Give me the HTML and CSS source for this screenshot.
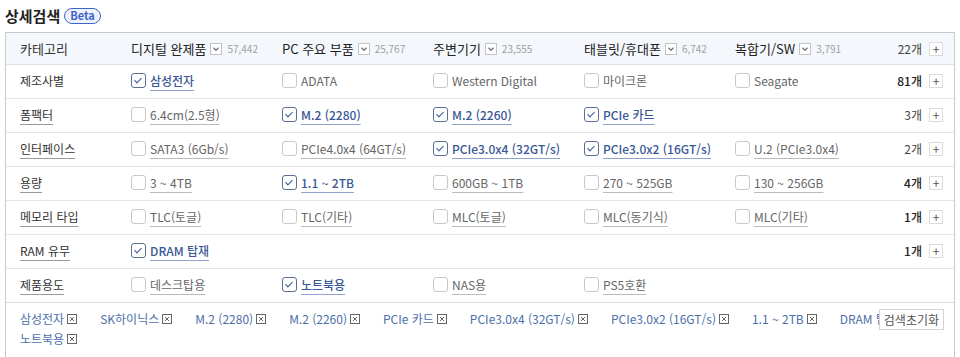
FILE: index.html
```html
<!DOCTYPE html>
<html lang="ko">
<head>
  <meta charset="UTF-8" />
  <title>상세검색</title>
  <link rel="stylesheet" href="styles.css">
</head>
<body>
  <div class="search">
    <h2 class="title">상세검색 <span class="beta">Beta</span></h2>

    <div class="box">
      <div class="row head">
        <div class="label">카테고리</div>
        <div class="cat">디지털 완제품 <span class="drop"><svg viewBox="0 0 10 10"><path d="M2.5 3.8 5 6.3 7.5 3.8" /></svg></span> <span class="num">57,442</span></div>
        <div class="cat">PC 주요 부품 <span class="drop"><svg viewBox="0 0 10 10"><path d="M2.5 3.8 5 6.3 7.5 3.8" /></svg></span> <span class="num">25,767</span></div>
        <div class="cat">주변기기 <span class="drop"><svg viewBox="0 0 10 10"><path d="M2.5 3.8 5 6.3 7.5 3.8" /></svg></span> <span class="num">23,555</span></div>
        <div class="cat">태블릿/휴대폰 <span class="drop"><svg viewBox="0 0 10 10"><path d="M2.5 3.8 5 6.3 7.5 3.8" /></svg></span> <span class="num">6,742</span></div>
        <div class="cat">복합기/SW <span class="drop"><svg viewBox="0 0 10 10"><path d="M2.5 3.8 5 6.3 7.5 3.8" /></svg></span> <span class="num">3,791</span></div>
        <div class="more"><span class="cnt">22개</span><span class="plus">+</span></div>
      </div>

      <div class="row">
        <div class="label plain">제조사별</div>
        <label class="opt on"><i class="chk"></i><span>삼성전자</span></label>
        <label class="opt plain"><i class="chk"></i><span>ADATA</span></label>
        <label class="opt plain"><i class="chk"></i><span>Western Digital</span></label>
        <label class="opt plain"><i class="chk"></i><span>마이크론</span></label>
        <label class="opt plain"><i class="chk"></i><span>Seagate</span></label>
        <div class="more"><span class="cnt bold">81개</span><span class="plus">+</span></div>
      </div>

      <div class="row">
        <div class="label">폼팩터</div>
        <label class="opt"><i class="chk"></i><span>6.4cm(2.5형)</span></label>
        <label class="opt on"><i class="chk"></i><span>M.2 (2280)</span></label>
        <label class="opt on"><i class="chk"></i><span>M.2 (2260)</span></label>
        <label class="opt on"><i class="chk"></i><span>PCIe 카드</span></label>
        <div class="opt"></div>
        <div class="more"><span class="cnt">3개</span><span class="plus">+</span></div>
      </div>

      <div class="row">
        <div class="label">인터페이스</div>
        <label class="opt"><i class="chk"></i><span>SATA3 (6Gb/s)</span></label>
        <label class="opt"><i class="chk"></i><span>PCIe4.0x4 (64GT/s)</span></label>
        <label class="opt on"><i class="chk"></i><span>PCIe3.0x4 (32GT/s)</span></label>
        <label class="opt on"><i class="chk"></i><span>PCIe3.0x2 (16GT/s)</span></label>
        <label class="opt"><i class="chk"></i><span>U.2 (PCIe3.0x4)</span></label>
        <div class="more"><span class="cnt">2개</span><span class="plus">+</span></div>
      </div>

      <div class="row">
        <div class="label">용량</div>
        <label class="opt"><i class="chk"></i><span>3 ~ 4TB</span></label>
        <label class="opt on"><i class="chk"></i><span>1.1 ~ 2TB</span></label>
        <label class="opt"><i class="chk"></i><span>600GB ~ 1TB</span></label>
        <label class="opt"><i class="chk"></i><span>270 ~ 525GB</span></label>
        <label class="opt"><i class="chk"></i><span>130 ~ 256GB</span></label>
        <div class="more"><span class="cnt bold">4개</span><span class="plus">+</span></div>
      </div>

      <div class="row">
        <div class="label">메모리 타입</div>
        <label class="opt"><i class="chk"></i><span>TLC(토글)</span></label>
        <label class="opt"><i class="chk"></i><span>TLC(기타)</span></label>
        <label class="opt"><i class="chk"></i><span>MLC(토글)</span></label>
        <label class="opt"><i class="chk"></i><span>MLC(동기식)</span></label>
        <label class="opt"><i class="chk"></i><span>MLC(기타)</span></label>
        <div class="more"><span class="cnt bold">1개</span><span class="plus">+</span></div>
      </div>

      <div class="row">
        <div class="label">RAM 유무</div>
        <label class="opt on"><i class="chk"></i><span>DRAM 탑재</span></label>
        <div class="opt"></div>
        <div class="opt"></div>
        <div class="opt"></div>
        <div class="opt"></div>
        <div class="more"><span class="cnt bold">1개</span><span class="plus">+</span></div>
      </div>

      <div class="row last">
        <div class="label">제품용도</div>
        <label class="opt"><i class="chk"></i><span>데스크탑용</span></label>
        <label class="opt on"><i class="chk"></i><span>노트북용</span></label>
        <label class="opt"><i class="chk"></i><span>NAS용</span></label>
        <label class="opt"><i class="chk"></i><span>PS5호환</span></label>
        <div class="opt"></div>
        <div class="more"></div>
      </div>

      <div class="picked">
        <div class="tags">
          <span class="tag">삼성전자 <i class="x"><svg viewBox="0 0 10 10"><rect x="0.5" y="0.5" width="9" height="9" /><path d="M3 3 7 7M7 3 3 7" /></svg></i></span>
          <span class="tag">SK하이닉스 <i class="x"><svg viewBox="0 0 10 10"><rect x="0.5" y="0.5" width="9" height="9" /><path d="M3 3 7 7M7 3 3 7" /></svg></i></span>
          <span class="tag">M.2 (2280) <i class="x"><svg viewBox="0 0 10 10"><rect x="0.5" y="0.5" width="9" height="9" /><path d="M3 3 7 7M7 3 3 7" /></svg></i></span>
          <span class="tag">M.2 (2260) <i class="x"><svg viewBox="0 0 10 10"><rect x="0.5" y="0.5" width="9" height="9" /><path d="M3 3 7 7M7 3 3 7" /></svg></i></span>
          <span class="tag">PCIe 카드 <i class="x"><svg viewBox="0 0 10 10"><rect x="0.5" y="0.5" width="9" height="9" /><path d="M3 3 7 7M7 3 3 7" /></svg></i></span>
          <span class="tag">PCIe3.0x4 (32GT/s) <i class="x"><svg viewBox="0 0 10 10"><rect x="0.5" y="0.5" width="9" height="9" /><path d="M3 3 7 7M7 3 3 7" /></svg></i></span>
          <span class="tag">PCIe3.0x2 (16GT/s) <i class="x"><svg viewBox="0 0 10 10"><rect x="0.5" y="0.5" width="9" height="9" /><path d="M3 3 7 7M7 3 3 7" /></svg></i></span>
          <span class="tag">1.1 ~ 2TB <i class="x"><svg viewBox="0 0 10 10"><rect x="0.5" y="0.5" width="9" height="9" /><path d="M3 3 7 7M7 3 3 7" /></svg></i></span>
          <span class="tag">DRAM 탑재 <i class="x"><svg viewBox="0 0 10 10"><rect x="0.5" y="0.5" width="9" height="9" /><path d="M3 3 7 7M7 3 3 7" /></svg></i></span>
          <span class="tag">노트북용 <i class="x"><svg viewBox="0 0 10 10"><rect x="0.5" y="0.5" width="9" height="9" /><path d="M3 3 7 7M7 3 3 7" /></svg></i></span>
        </div>
        <button class="reset">검색초기화</button>
      </div>
    </div>
  </div>
</body>
</html>
```

FILE: styles.css
```css
* { box-sizing: border-box; margin: 0; padding: 0; }
body {
  font-family: "Noto Sans CJK KR", "Noto Sans", sans-serif;
  font-size: 12px;
  color: #333;
  background: #fff;
}
.search {
  width: 950px;
  margin-left: 5px;
}
.title {
  height: 32px;
  display: flex;
  align-items: center;
  gap: 4px;
  font-size: 15px;
  font-weight: bold;
  color: #222;
  padding-bottom: 1px;
}
.beta {
  display: inline-block;
  height: 16px;
  line-height: 13px;
  padding: 0 5px;
  border: 1.5px solid #3e64c8;
  border-radius: 9px;
  background: #eef3ff;
  color: #3e64c8;
  font-size: 11px;
  font-weight: bold;
}
.box {
  border: 1px solid #c9c9c9;
}
.row {
  display: grid;
  grid-template-columns: 125px repeat(5, 151px) 1fr;
  align-items: center;
  height: 34px;
  padding-bottom: 2px;
  border-bottom: 1px solid #e6e6e6;
}
.row.head {
  height: 32px;
  padding-bottom: 0;
  background: #f4f7fb;
  border-bottom-color: #dfe3e8;
  font-size: 13px;
  color: #222;
}
.row.last { border-bottom-color: #dcdcdc; }
.label {
  padding-left: 14px;
  color: #333;
}
.row:not(.head) .label {
  justify-self: start;
}
.row:not(.head) .label:not(.plain) {
  text-decoration: underline;
  text-decoration-color: #999;
  text-underline-offset: 4px;
}
.cat {
  display: flex;
  align-items: center;
  white-space: nowrap;
}
.drop {
  display: inline-flex;
  width: 12px;
  height: 12px;
  margin: 0 5px 0 4px;
  border: 1px solid #c4c4c4;
  background: #fff;
}
.drop svg {
  width: 10px;
  height: 10px;
  fill: none;
  stroke: #777;
  stroke-width: 1.3;
}
.num {
  font-size: 10px;
  color: #a0a0a0;
}
.more {
  display: flex;
  justify-content: flex-end;
  align-items: center;
  gap: 7px;
  padding-right: 11px;
}
.cnt {
  font-size: 12px;
  color: #444;
}
.cnt.bold { font-weight: 500; color: #222; }
.plus {
  width: 14px;
  height: 14px;
  border: 1px solid #dcdcdc;
  background: #fff;
  display: flex;
  align-items: center;
  justify-content: center;
  font-size: 12px;
  line-height: 1;
  color: #555;
}
.opt {
  display: flex;
  align-items: center;
  gap: 4px;
  color: #666;
  white-space: nowrap;
}
.opt span {
  text-decoration: underline;
  text-decoration-color: #bbb;
  text-underline-offset: 4px;
}
.opt.plain span { text-decoration: none; }
.chk {
  width: 15px;
  height: 15px;
  border: 1px solid #c8c8c8;
  border-radius: 3px;
  background: #fff;
  flex: none;
  position: relative;
}
.opt.on { color: #3a5796; font-weight: 500; }
.opt.on span { text-decoration-color: #8ea2cc; }
.opt.on .chk { border-color: #5b6f92; }
.opt.on .chk::after {
  content: "";
  position: absolute;
  left: 4px;
  top: 2px;
  width: 3px;
  height: 6px;
  border: solid #3a5796;
  border-width: 0 1.6px 1.6px 0;
  transform: rotate(45deg);
}
.picked {
  position: relative;
  padding: 6px 40px 8px 14px;
  min-height: 52px;
}
.tags {
  display: flex;
  flex-wrap: wrap;
  column-gap: 23px;
  line-height: 20px;
  color: #4b6fa8;
}
.tag {
  display: inline-flex;
  align-items: center;
  gap: 3px;
  white-space: nowrap;
}
.x {
  display: inline-flex;
  width: 10px;
  height: 10px;
}
.x svg {
  width: 10px;
  height: 10px;
  fill: #fff;
  stroke: #666;
  stroke-width: 1;
}
.reset {
  position: absolute;
  right: 10px;
  top: 6px;
  height: 21px;
  padding: 0 4px;
  border: 1px solid #d4d4d4;
  background: #fff;
  font-family: inherit;
  font-size: 12px;
  color: #555;
}
```
